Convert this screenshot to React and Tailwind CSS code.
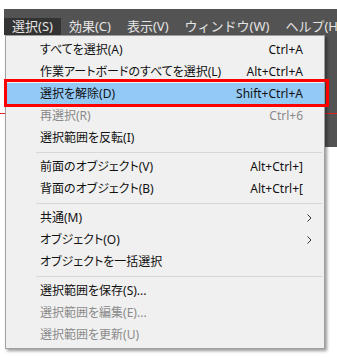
import React from "react";

const topMenus = [
  { label: "選択(S)", active: true },
  { label: "効果(C)" },
  { label: "表示(V)" },
  { label: "ウィンドウ(W)" },
  { label: "ヘルプ(H)" },
];

// menu rows, "sep" draws a divider
const items = [
  { label: "すべてを選択(A)", key: "Ctrl+A" },
  { label: "作業アートボードのすべてを選択(L)", key: "Alt+Ctrl+A" },
  { label: "選択を解除(D)", key: "Shift+Ctrl+A", hot: true },
  { label: "再選択(R)", key: "Ctrl+6", off: true },
  { label: "選択範囲を反転(I)" },
  "sep",
  { label: "前面のオブジェクト(V)", key: "Alt+Ctrl+]" },
  { label: "背面のオブジェクト(B)", key: "Alt+Ctrl+[" },
  "sep",
  { label: "共通(M)", sub: true },
  { label: "オブジェクト(O)", sub: true },
  { label: "オブジェクトを一括選択" },
  "sep",
  { label: "選択範囲を保存(S)..." },
  { label: "選択範囲を編集(E)...", off: true },
  { label: "選択範囲を更新(U)", off: true },
];

const Chevron = () => (
  <svg width="5" height="8" viewBox="0 0 5 8" className="mr-[-9px]">
    <polyline points="0.5,0.5 4,4 0.5,7.5" fill="none" stroke="#333" strokeWidth="1" />
  </svg>
);

const App = () => {
  return (
    <div
      className="relative w-[337px] h-[358px] overflow-hidden bg-white"
      style={{ fontFamily: "'Noto Sans', 'Noto Sans CJK JP', sans-serif" }}
    >
      {/* MENU BAR */}
      <div className="pt-[9px] pl-[4px]">
        <div className="flex items-end h-[26px] bg-[#535353] whitespace-nowrap">
          {topMenus.map((m) => (
            <div
              key={m.label}
              className={`h-[17px] px-[8px] flex items-center text-[13px] leading-none text-[#e4e4e4] ${
                m.active ? "bg-[#333333]" : ""
              }`}
            >
              {m.label}
            </div>
          ))}
        </div>
        {/* canvas behind the menu */}
        <div className="relative h-[112px] ml-[146px] bg-[#535353]">
          <div className="absolute left-[-150px] right-0 top-[78px] h-[1px] bg-[#e02020]" />
        </div>
      </div>

      {/* DROPDOWN */}
      <div className="absolute left-[5px] top-[35px] w-[320px] bg-[#f0f0f0] border border-[#a0a0a0] pt-[3px] pb-[2px] shadow-[2px_2px_3px_rgba(0,0,0,0.4)] [font-feature-settings:'palt']">
        {items.map((it, i) =>
          it === "sep" ? (
            <div key={i} className="h-[7px] flex items-center pl-[30px] pr-[2px]">
              <div className="h-[1px] w-full bg-[#d7d7d7]" />
            </div>
          ) : (
            <div
              key={i}
              className={`relative h-[22px] flex items-center justify-between pl-[34px] pr-[21px] text-[12px] leading-none whitespace-nowrap ${
                it.off ? "text-[#8a8a8a]" : "text-[#111111]"
              } ${it.hot ? "bg-[#93c9f5]" : ""}`}
            >
              <span>{it.label}</span>
              {it.key && <span>{it.key}</span>}
              {it.sub && <Chevron />}
              {it.hot && (
                <div className="absolute left-[-2px] right-[-5px] top-[-4px] bottom-[-2px] border-[3px] border-[#ff0000]" />
              )}
            </div>
          )
        )}
      </div>
    </div>
  );
};

export default App;
